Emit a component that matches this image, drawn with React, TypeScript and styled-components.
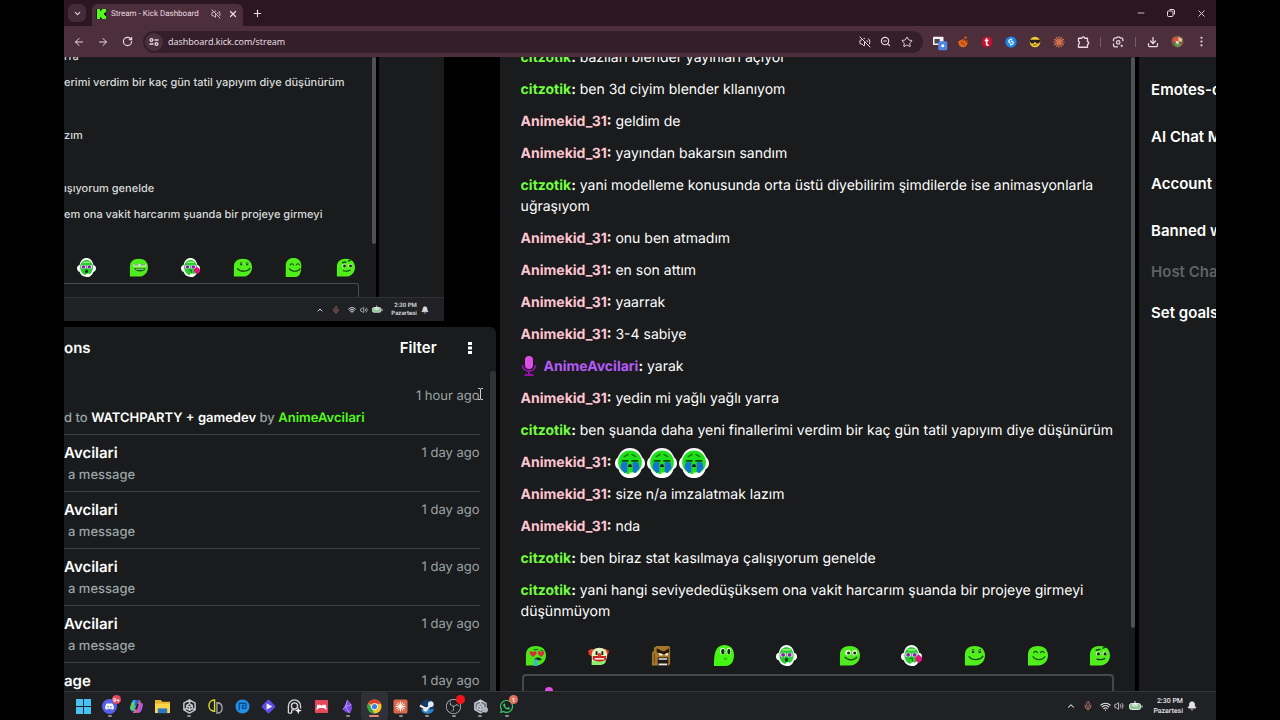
import React from "react";
import styled, { createGlobalStyle } from "styled-components";
import {
  ArrowLeft, ArrowRight, RotateCw, ChevronDown, ChevronUp, X, Plus, Minus, Copy, VolumeOff, ZoomOut, Star,
  Download, EllipsisVertical, Mic, Wifi, Volume2, Bell,
} from "lucide-react";
import { FaDiscord, FaSteam, FaWhatsapp } from "react-icons/fa";
import { SiObsstudio } from "react-icons/si";

const color = {
  frame: "#2c1621",
  toolbar: "#4d2f3c",
  field: "#341e29",
  chromeText: "#ead9e0",
  panel: "#191b1c",
  line: "#3b3f41",
  thumb: "#4f5153",
  muted: "#9aa3a6",
  green: "#53fc18",
  pink: "#ffc5d0",
  purple: "#b45af5",
  taskbar: "#202125",
};

const Global = createGlobalStyle`
  * { box-sizing: border-box; }
  body { margin: 0; background: #000; font-family: Inter, "Liberation Sans", sans-serif; color: #fff; text-rendering: geometricPrecision; }
  button { border: 0; padding: 0; margin: 0; background: none; color: inherit; font: inherit; display: flex; align-items: center; justify-content: center; }
  input { border: 0; background: none; outline: 0; padding: 0; min-width: 0; }
  a { color: inherit; text-decoration: none; }
  ul, p, h2, h3 { margin: 0; padding: 0; list-style: none; font-weight: inherit; }
  svg { display: block; flex: none; }
`;

const Screen = styled.div`
  height: 100vh;
  padding: 0 5%;
  display: flex;
  flex-direction: column;
  overflow: hidden;
`;

/* ---------- browser chrome ---------- */
const TabStrip = styled.div`
  height: 26px;
  padding: 0 6px 0 4px;
  display: flex;
  align-items: flex-end;
  background: ${color.frame};
  color: ${color.chromeText};
  font-family: Roboto, "Open Sans", sans-serif;
`;
const TabSearch = styled.button`
  && { width: 18px; height: 18px; margin: 0 6px 4px 0; border-radius: 6px; background: #462b38; }
`;
const Tab = styled.div`
  width: 151px;
  height: 22px;
  padding: 0 4px 2px;
  display: flex;
  align-items: center;
  gap: 5px;
  border-radius: 6px 6px 0 0;
  background: ${color.toolbar};
  font-size: 8px;
  line-height: 12px;
`;
const TabTitle = styled.span`
  flex: 1;
  white-space: nowrap;
`;
const TabButton = styled.button`
  && { width: 12px; height: 12px; }
`;
const NewTab = styled.button`
  && { width: 16px; height: 16px; margin: 0 auto 5px 6px; }
`;
const WindowButton = styled.button`
  && { width: 30px; height: 26px; }
  &:last-child { margin-right: -6px; }
`;
const Toolbar = styled.div`
  height: 31px;
  padding: 0 3px;
  display: flex;
  align-items: center;
  background: ${color.toolbar};
  color: ${color.chromeText};
`;
const ToolButton = styled.button`
  && { width: 24px; height: 24px; }
`;
const AddressBar = styled.label`
  flex: 1;
  height: 22px;
  margin: 0 4px;
  padding: 0 6px 0 2px;
  display: flex;
  align-items: center;
  border-radius: 11px;
  background: ${color.field};
`;
const SiteInfo = styled.span`
  width: 18px;
  height: 18px;
  margin-right: 5px;
  display: grid;
  place-items: center;
  border-radius: 50%;
  background: #4b303d;
`;
const AddressInput = styled.input`
  flex: 1;
  height: 18px;
  color: #f1e4ea;
  font: 9px/18px "Open Sans", "Noto Sans", sans-serif;
`;
const SmallButton = styled.button`
  && { width: 21px; height: 20px; }
`;
const Divider = styled.span`
  width: 1px;
  height: 10px;
  margin: 0 5px;
  background: #7c5a69;
`;

/* ---------- page ---------- */
const Page = styled.main`
  flex: 1;
  min-height: 0;
  display: grid;
  grid-template-columns: 432fr 636fr 77fr;
  grid-template-rows: minmax(0, 1fr);
  column-gap: 4px;
  background: #000;
  overflow: hidden;
`;
const LeftColumn = styled.div`
  min-width: 0;
  display: flex;
  flex-direction: column;
  gap: 6px;
`;

const Preview = styled.section`
  width: 88%;
  height: 264px;
  display: flex;
  flex-direction: column;
  color: #d8dada;
`;
const PreviewBody = styled.div`
  flex: 1;
  min-height: 0;
  display: flex;
  gap: 3px;
`;
const PreviewChat = styled.div`
  flex: 1;
  min-width: 0;
  display: flex;
  background: ${color.panel};
`;
const PreviewSide = styled.div`
  width: 17%;
  background: ${color.panel};
`;
const PreviewContent = styled.div`
  flex: 1;
  min-width: 0;
  display: flex;
  flex-direction: column;
  overflow: hidden;
`;
const PreviewLines = styled.div`
  flex: 1;
  min-height: 0;
  display: flex;
  flex-direction: column;
  justify-content: flex-end;
  overflow: hidden;
`;
const PreviewLine = styled.p<{ $gap: number }>`
  margin-bottom: ${(p) => p.$gap}px;
  font-size: 11px;
  line-height: 18px;
  && { font-weight: 500; }
  white-space: nowrap;
`;
const PreviewEmotes = styled.div`
  padding: 0 17px 0 13px;
  margin-bottom: 6px;
  display: flex;
  justify-content: space-between;
`;
const PreviewComposer = styled.div`
  height: 14px;
  margin-right: 13px;
  border: 1px solid #4a4c4e;
  border-width: 1px 1px 0 0;
  border-radius: 0 3px 0 0;
`;
const PreviewTaskbar = styled.div`
  height: 24px;
  padding-right: 15px;
  display: flex;
  align-items: center;
  justify-content: flex-end;
  gap: 4px;
  border-top: 1px solid #303134;
  background: ${color.taskbar};
`;
const PreviewClock = styled.time`
  margin-left: 4px;
  font: 600 6px/8px Roboto, "Open Sans", sans-serif;
  text-align: right;
`;

const Thumb = styled.span<{ $height: string; $wide?: boolean }>`
  width: ${(p) => (p.$wide ? 6 : 4)}px;
  height: ${(p) => p.$height};
  flex: none;
  border-radius: 2px;
  background: ${(p) => (p.$wide ? "#303234" : color.thumb)};
`;

const Activity = styled.section`
  flex: 1;
  min-height: 0;
  display: flex;
  flex-direction: column;
  border-radius: 0 6px 0 0;
  background: ${color.panel};
  overflow: hidden;
`;
const ActivityHeader = styled.header`
  height: 44px;
  padding: 0 18px 2px 0;
  display: flex;
  align-items: center;
  font-size: 15px;
  line-height: 20px;
  font-weight: 600;
`;
const ActivityTitle = styled.h2`
  && { flex: 1; font-size: 15px; font-weight: 600; }
`;
const MenuButton = styled.button`
  && { width: 16px; height: 16px; margin-left: 25px; }
`;
const ActivityBody = styled.div`
  flex: 1;
  min-height: 0;
  display: flex;
  overflow: hidden;
`;
const ActivityList = styled.ul`
  && { flex: 1; min-width: 0; margin-right: 10px; }
`;
const ActivityItem = styled.li<{ $first?: boolean }>`
  height: ${(p) => (p.$first ? 64 : 57)}px;
  padding-top: ${(p) => (p.$first ? 15 : 8)}px;
  border-bottom: 1px solid ${color.line};
  font-size: 13px;
  line-height: 20px;
`;
const ItemTop = styled.div`
  display: flex;
  justify-content: space-between;
  color: ${color.muted};
`;
const ItemName = styled.h3`
  && { color: #fff; font-size: 15px; font-weight: 600; }
`;
const ItemText = styled.p<{ $indent?: boolean }>`
  && { padding-left: ${(p) => (p.$indent ? 4 : 0)}px; margin-top: 2px; font-weight: 500; }
  color: ${color.muted};
  white-space: nowrap;
  b { color: #fff; font-weight: 600; }
  a { color: ${color.green}; font-weight: 600; }
`;

const Chat = styled.section`
  min-width: 0;
  min-height: 0;
  display: flex;
  background: ${color.panel};
`;
const ChatMain = styled.div`
  flex: 1;
  min-width: 0;
  padding: 0 17px 0 21px;
  display: flex;
  flex-direction: column;
  overflow: hidden;
`;
const Messages = styled.ul`
  && { flex: 1; min-height: 0; display: flex; flex-direction: column; justify-content: flex-end; gap: 11px; overflow: hidden; }
`;
const Message = styled.li`
  flex: none;
  font-size: 14px;
  line-height: 21px;
`;
const User = styled.b<{ $tone: string }>`
  color: ${(p) => p.$tone};
  font-weight: 700;
`;
const Badge = styled.span`
  display: inline-block;
  height: 20px;
  margin-right: 7px;
  vertical-align: top;
`;
const InlineEmotes = styled.span`
  height: 21px;
  display: inline-flex;
  align-items: center;
  gap: 2px;
  vertical-align: top;
`;
const EmoteRow = styled.div`
  margin: 22px 3px 8px 4px;
  display: flex;
  justify-content: space-between;
`;
const EmoteButton = styled.button`
  && { width: 22px; height: 22px; }
`;
const Composer = styled.label`
  height: 17px;
  margin-left: 1px;
  padding: 11px 16px 0 17px;
  display: flex;
  align-items: flex-start;
  border: 1px solid #46494b;
  border-width: 2px 2px 0;
  border-radius: 4px 4px 0 0;
  overflow: hidden;
`;
const ComposerInput = styled.input`
  flex: 1;
  margin-left: 8px;
  color: #fff;
`;

const Actions = styled.nav`
  min-width: 0;
  padding: 23px 0 0 12px;
  display: flex;
  flex-direction: column;
  align-items: flex-start;
  background: ${color.panel};
  overflow: hidden;
`;
const Action = styled.button<{ $off?: boolean; $tight?: boolean }>`
  && {
    margin-bottom: ${(p) => (p.$tight ? 21 : 27)}px;
    color: ${(p) => (p.$off ? "#5f6264" : "#fff")};
    font-size: 15px;
    line-height: 20px;
    font-weight: 600;
    white-space: nowrap;
  }
`;

/* ---------- taskbar ---------- */
const Taskbar = styled.footer`
  height: 29px;
  padding: 0 19px 0 6px;
  display: flex;
  align-items: stretch;
  border-top: 1px solid #36373a;
  background: ${color.taskbar};
`;
const Apps = styled.div`
  width: 450px;
  display: grid;
  grid-template-columns: repeat(17, 1fr);
`;
const TaskButton = styled.button<{ $open?: boolean; $active?: boolean }>`
  && {
    position: relative;
    border-radius: 3px;
    background: ${(p) => (p.$active ? "#303136" : "none")};
  }
  &::after {
    content: "";
    position: absolute;
    bottom: 3px;
    width: ${(p) => (p.$active ? 10 : 4)}px;
    height: 2px;
    border-radius: 1px;
    background: ${(p) => (p.$active ? "#e0857a" : p.$open ? "#8c8d90" : "transparent")};
  }
`;
const Count = styled.span<{ $tone: string }>`
  position: absolute;
  top: 3px;
  right: 2px;
  width: 9px;
  height: 9px;
  border-radius: 50%;
  background: ${(p) => p.$tone};
  color: #fff;
  font: 600 6px/9px Roboto, sans-serif;
  text-align: center;
`;
const Tray = styled.div`
  margin-left: auto;
  display: flex;
  align-items: center;
  gap: 4px;
  color: #e3e3e6;
`;
const TrayButton = styled.button<{ $wide?: boolean }>`
  && { width: ${(p) => (p.$wide ? 16 : 10)}px; height: 16px; }
`;
const Clock = styled.time`
  margin-left: 5px;
  font: 500 7px/10px Roboto, "Open Sans", sans-serif;
  text-align: right;
`;
const Cursor = styled.svg`
  position: absolute;
  right: -4px;
  top: 2px;
`;
const Time = styled.time`
  position: relative;
`;

/* ---------- emotes ---------- */
type Kind = "love" | "clown" | "brick" | "look" | "rave" | "smile" | "raveKiss" | "grin" | "happy" | "think" | "cool" | "cry" | "tall";

const BLOB = "M1 21.500V10C1 4.500 5 1 11.500 1S22 5 22 11s-5 10.500-10 10.500Z";

const Headset = ({ children }: { children: React.ReactNode }) => (
  <>
    <path d="M3 8C4 3 7 0 11 0s7 3 8 8c2 .5 3 2 3 4s-1 4-3 4c-1 3-3 6-7 6S4 20 3 16c-2 0-3-2-3-4s1-3.500 3-4Z" fill="#fff" />
    <ellipse cx="11" cy="11" rx="7.500" ry="9" fill="#2bd02f" />
    {children}
    <rect x="10" y="18" width="5" height="4" rx="2" fill="#fff" />
  </>
);

const Emote = ({ kind, size = 22 }: { kind: Kind; size?: number }) => (
  <svg width={size} height={size} viewBox="0 0 22 22" fill="none">
    {kind === "love" && (
      <>
        <path d={BLOB} fill="#4fe51d" />
        <path d="M9 5 14 4.500M16 5.500l3 1" stroke="#14500c" />
        <path d="M5 6.500h2l1.500 1 1.500-1h2V9.500L8.500 12.500 5 9.500ZM13.500 6.500h2l1.200 1 1.300-1h2V9.500L16.800 12.500l-3.300-3Z" fill="#d92c3a" />
        <path d="M10 15c1-2.500 6-2.500 7 0v1h-7Z" fill="#122b12" />
        <path d="M9.500 15h3.500v7H9.500Z" fill="#33b5e8" />
      </>
    )}
    {kind === "clown" && (
      <>
        <path d="M0 6l4-2 3 1v6l-3 1-3-2ZM22 6l-4-2-3 1v6l3 1 3-2Z" fill="#e2402f" />
        <path d="M4 21V10c0-4 3-7 8-7s8 3 8 8-3 9-8 10Z" fill="#dff5bd" />
        <path d="M4 17h15c-1 3-4 4-7 4H4Z" fill="#8df06a" />
        <path d="M5 11.500h14v4c-4 2.500-10 2.500-14 0Z" fill="#c3281f" />
        <path d="M7 14.500h10" stroke="#fff" strokeWidth="1.500" />
        <path d="M9 6.500v4M15 6.500v4" stroke="#1c1c1c" strokeWidth="2" />
        <circle cx="12" cy="10.500" r="2" fill="#ea3528" />
      </>
    )}
    {kind === "brick" && (
      <>
        <path d="M1 21.500V8l2-2V3l3-2h13l1 2v17l-1 1.500Z" fill="#a3762a" />
        <path d="M3.500 9v10" stroke="#79551a" strokeWidth="1.500" />
        <path d="M6 3.500 12 6.500h2l5-3v4l-5 2h-2l-6-2Z" fill="#22190d" />
        <path d="M8 8.500l4 1v1.500H9ZM18 8.500l-3 1v1.500h2.500Z" fill="#fff" />
        <rect x="7" y="13" width="11" height="8.500" fill="#1e1a18" />
        <path d="M8 14.700h9M8 20.300h9" stroke="#e8e8e8" strokeWidth="1.600" />
      </>
    )}
    {kind === "look" && (
      <>
        <path d="M1 22c0-5 0-8 1-13C3 4 6 0 12 0s10 4 10 10-2 12-9 12Z" fill="#45f513" />
        <ellipse cx="10" cy="6.500" rx="2.600" ry="3.500" fill="#e8ffe0" /><ellipse cx="16.500" cy="6.500" rx="2.300" ry="3.500" fill="#e8ffe0" />
        <ellipse cx="10.300" cy="6.800" rx="1.800" ry="3" fill="#123010" /><ellipse cx="16.600" cy="6.800" rx="1.600" ry="3" fill="#123010" />
        <path d="M11.500 15 13 14l1.500 1" stroke="#196b10" />
      </>
    )}
    {(kind === "rave" || kind === "raveKiss") && (
      <Headset>
        <path d="M7 5h8" stroke="#9ef08a" strokeWidth="1.500" />
        <rect x="4.500" y="8" width="6" height="4.500" rx="2" fill="#eee4ff" /><rect x="11.500" y="8" width="6" height="4.500" rx="2" fill="#eee4ff" />
        <circle cx="7.500" cy="10.300" r="2" fill="#8a1fae" /><circle cx="14.300" cy="10.300" r="2" fill="#8a1fae" />
        {kind === "rave" ? (
          <ellipse cx="11" cy="15.500" rx="1.800" ry="2.200" fill="#123b17" />
        ) : (
          <>
            <path d="M9 14h3v3" stroke="#0c5d1b" />
            <path d="M15 13l3.500-3 3.500 3v3l-3.500 3-3.500-3Z" fill="#e0147c" />
          </>
        )}
      </Headset>
    )}
    {kind === "smile" && (
      <>
        <path d={BLOB} fill="#50ea20" />
        <ellipse cx="9.500" cy="8" rx="3" ry="2.700" fill="#f2ffe9" /><ellipse cx="16.500" cy="8" rx="2.600" ry="2.700" fill="#f2ffe9" />
        <circle cx="10" cy="8.300" r="1.600" fill="#123010" /><circle cx="16.500" cy="8.300" r="1.600" fill="#123010" />
        <path d="M6 12.500c3 4 10 4 13 0" stroke="#164d10" strokeWidth="1.400" />
      </>
    )}
    {kind === "grin" && (
      <>
        <path d={BLOB} fill="#50ef1c" />
        <path d="M9.500 4.500v4M16.500 4.500v4" stroke="#12300e" strokeWidth="2.200" /><path d="M9.500 5v1.500M16.500 5v1.500" stroke="#e8ffe0" />
        <path d="M5 12c3 4.500 12 4.500 15-.5" stroke="#16540f" strokeWidth="1.500" />
      </>
    )}
    {(kind === "happy" || kind === "tall") && (
      <>
        <path d={kind === "tall" ? "M2 22V9C2 3 6 0 11 0s9 3 9 9-1 13-7 13Z" : BLOB} fill="#50ef1c" />
        <path d="M7 8.500c.5-2.500 3.500-2.500 4 0M14 8.500c.5-2.500 3.500-2.500 4 0M6 12c3 4.500 10 4.500 13 0" stroke="#16540f" strokeWidth="1.300" />
      </>
    )}
    {kind === "think" && (
      <>
        <path d={BLOB} fill="#50ef1c" />
        <path d="M7 5.500 12 4.500M14 3.500l4-1.500" stroke="#12400d" strokeWidth="1.500" />
        <circle cx="9.500" cy="9" r="2.300" fill="#eaffdf" /><circle cx="16.500" cy="9" r="2.300" fill="#eaffdf" />
        <circle cx="9.800" cy="9.300" r="1.700" fill="#12300e" /><circle cx="16.800" cy="9.300" r="1.700" fill="#12300e" />
        <path d="M8 14.500c3 1.500 6 1 9-.5" stroke="#12400d" strokeWidth="1.300" />
      </>
    )}
    {kind === "cool" && (
      <>
        <path d={BLOB} fill="#50ea20" />
        <path d="M5 8.500h15" stroke="#d9f5cf" strokeWidth="3" /><path d="M6 8h5M13 8h6" stroke="#317d21" />
        <path d="M6 12h13c-1 5-11 5-13 0Z" fill="#146016" /><path d="M8 13h9" stroke="#b8f0a8" />
      </>
    )}
    {kind === "cry" && (
      <>
        <path d="M2 7C4 2 7 0 11 0s7 2 9 7c1.500 1 2 3 2 4.500s-1 3.500-2.500 4C18 20 15 22 11 22S4 20 2.500 15.500C1 15 0 13 0 11.500S.5 8 2 7Z" fill="#fff" />
        <circle cx="11" cy="10.500" r="8.700" fill="#1fe01a" />
        <path d="M6.500 6.500 10 4.500M15.500 6.500 12 4.500" stroke="#0b7a12" /><path d="M5 9.500h5M12 9.500h5" stroke="#0b4a12" strokeWidth="1.300" />
        <path d="M5 10.500h4v7l-2 1-3-4ZM13 10.500h4l1 4-3 4-2-1Z" fill="#1670d8" />
        <path d="M9.500 14c0-3 3-3 3 0Z" fill="#08200c" />
        <rect x="10" y="18" width="5" height="3.500" rx="1.700" fill="#fff" />
      </>
    )}
  </svg>
);

const MicBadge = () => (
  <svg width="16" height="20" viewBox="0 0 16 20" fill="none">
    <path d="M1.500 9c0 8 13 8 13 0M8 15v4M3.500 19h9" stroke="#8f11a8" strokeWidth="2" />
    <rect x="4" y="0" width="8" height="13" rx="4" fill="#dc4fe6" />
  </svg>
);

/* ---------- data ---------- */
type Line = { user: "citzotik" | "Animekid_31" | "AnimeAvcilari"; text?: string; cry?: boolean };
const lines: Line[] = [
  { user: "citzotik", text: "bazıları blender yayınları açıyor" },
  { user: "citzotik", text: "ben 3d ciyim blender kllanıyom" },
  { user: "Animekid_31", text: "geldim de" },
  { user: "Animekid_31", text: "yayından bakarsın sandım" },
  { user: "citzotik", text: "yani modelleme konusunda orta üstü diyebilirim şimdilerde ise animasyonlarla uğraşıyom" },
  { user: "Animekid_31", text: "onu ben atmadım" },
  { user: "Animekid_31", text: "en son attım" },
  { user: "Animekid_31", text: "yaarrak" },
  { user: "Animekid_31", text: "3-4 sabiye" },
  { user: "AnimeAvcilari", text: "yarak" },
  { user: "Animekid_31", text: "yedin mi yağlı yağlı yarra" },
  { user: "citzotik", text: "ben şuanda daha yeni finallerimi verdim bir kaç gün tatil yapıyım diye düşünürüm" },
  { user: "Animekid_31", cry: true },
  { user: "Animekid_31", text: "size n/a imzalatmak lazım" },
  { user: "Animekid_31", text: "nda" },
  { user: "citzotik", text: "ben biraz stat kasılmaya çalışıyorum genelde" },
  { user: "citzotik", text: "yani hangi seviyededüşüksem ona vakit harcarım şuanda bir projeye girmeyi düşünmüyom" },
];
const tone = { citzotik: "#72fc3f", Animekid_31: color.pink, AnimeAvcilari: color.purple };
const rowEmotes: Kind[] = ["love", "clown", "brick", "look", "rave", "smile", "raveKiss", "grin", "happy", "think"];
const previewEmotes: Kind[] = ["rave", "cool", "raveKiss", "grin", "tall", "think"];

/* ---------- small drawings ---------- */
const KickLogo = () => (
  <svg width="10" height="10" viewBox="0 0 10 10">
    <rect width="10" height="10" fill="#0b1a08" />
    <path d="M1 0h3v2h1V1h1V0h4v3H9v1H8v2h1v1h1v3H6V9H5V8H4v2H1Z" fill="#53fc18" />
  </svg>
);
const Tune = () => (
  <svg width="10" height="10" viewBox="0 0 10 10" fill="none" stroke={color.chromeText} strokeWidth="1.300">
    <circle cx="2.500" cy="3" r="1.400" /><path d="M5.500 3H9.500M.5 7h4" /><circle cx="7.500" cy="7" r="1.400" />
  </svg>
);
const burst = (stroke: string, width: number) => (
  <path d="M8 8V1M8 8l3.500-6M8 8l6-3.500M8 8h7M8 8l6 3.500M8 8l3.500 6M8 8v7M8 8l-3.500 6M8 8l-6 3.500M8 8H1M8 8 2 4.500M8 8 4.500 2" stroke={stroke} strokeWidth={width} strokeLinecap="round" />
);

const extensions: { name: string; art: React.ReactNode }[] = [
  { name: "Window capture", art: (<><rect x="0" y="1" width="14" height="11" rx="1" fill="#f3f1f3" /><path d="M2 4h7v6H2Z" fill="#4b4650" /><rect x="7" y="7" width="12" height="12" rx="2" fill="#4d86e0" /><circle cx="13" cy="13" r="2" fill="#fff" /></>) },
  { name: "Cookies", art: (<><path d="M2 7l6-3 6 4c0 5-3 7-6 7s-7-3-6-8Z" fill="#e8671c" /><path d="M8 7l3-5M11 9l4-4M5 8l5 4" stroke="#9c3d12" strokeWidth="1.500" /><circle cx="11.500" cy="2" r="1.500" fill="#e8671c" /></>) },
  { name: "Turbo", art: (<><rect x="1" y="1" width="14" height="14" rx="6" fill="#c4122e" /><path d="M7.500 3v7.500c0 1.500 1 1.800 2.500 1.500M5 6h5" stroke="#fff" strokeWidth="2.200" /></>) },
  { name: "Shazam", art: (<><circle cx="8" cy="8" r="7.500" fill="#1d86ea" /><path d="M9.500 4C4 5 3.500 8 8 9.500M6.500 12c5.500-1 6-4 1.500-5.500" stroke="#e6f3ff" strokeWidth="1.700" /></>) },
  { name: "Emoji", art: (<><circle cx="8" cy="8" r="7" fill="#f6cb37" /><path d="M1 5h14v2l-2 3h-3L8 7.500 6 10H3L1 7Z" fill="#2a2024" /><path d="M5.500 12h5" stroke="#8a4b12" strokeWidth="1.400" /></>) },
  { name: "Assistant", art: burst("#d0714f", 1.6) },
  { name: "Extensions", art: <path d="M2 3h4.500a1.800 1.800 0 0 1 3.600 0H14v4.500a1.700 1.700 0 0 1 0 3.400V15H2v-4.300a1.800 1.800 0 0 0 0-3.500Z" stroke={color.chromeText} strokeWidth="1.700" strokeLinejoin="round" /> },
];

const cube = (stroke: string, width: number) => (
  <path d="M8 1l6 3.500v7L8 15l-6-3.500v-7ZM8 5l3 1.700v3.400L8 12l-3-1.900V6.700ZM8 8.500V12M5 6.700l3 1.800 3-1.800M8 1v4M2 11.500l3-1.400M14 11.500l-3-1.400" stroke={stroke} strokeWidth={width} strokeLinejoin="round" />
);

const taskApps: { name: string; art: React.ReactNode; open?: boolean; active?: boolean; count?: string; tone?: string }[] = [
  { name: "Start", art: (<path d="M0 0h7.500v7.500H0ZM8.500 0H16v7.500H8.500ZM0 8.500h7.500V16H0ZM8.500 8.500H16V16H8.500Z" fill="#46c3f3" />) },
  { name: "Discord", open: true, count: "9+", tone: "#e2495c", art: (<><circle cx="8" cy="8" r="8" fill="#5562ea" /><g transform="translate(3 3)"><FaDiscord size={10} color="#fff" /></g></>) },
  { name: "Copilot", art: (<><path d="M4 1h6L7 12c-1 2-6 1-6-2Z" fill="#29a8df" /><path d="M1 9 3 3l4 1-2 8H3Z" fill="#5fc86a" /><path d="M10 1c3 0 3 3 2 6l-2 6c-1 2-5 2-6 2l3-5 1-6Z" fill="#e7607a" /><path d="M7 1h4L9 7H6Z" fill="#2b5fd2" /><path d="M12 4c4 0 3 3 2 6-1 4-3 5-6 5Z" fill="#b25bd8" /><path d="M9.500 5.500 7.500 11" stroke={color.taskbar} strokeWidth="2" /></>) },
  { name: "Files", art: (<><path d="M0 1h6l2 2h8v11H0Z" fill="#e9b52b" /><path d="M0 5h16v10H0Z" fill="#fbd64b" /><path d="M3 10h10v5H3Z" fill="#2878c8" /></>) },
  { name: "Unity Hub", open: true, art: cube("#c3c5c9", 1.6) },
  { name: "Editor", art: (<><path d="M7 1v12C3 13 1 10 1 7s2-6 6-6Z" stroke="#d9dc2b" strokeWidth="1.500" /><path d="M9.500 4v11c3.500 0 5.500-2 5.500-5.500S13 4 9.500 4Z" stroke="#a9abae" strokeWidth="1.400" /></>) },
  { name: "Mail", art: (<><circle cx="8" cy="8" r="7.500" fill="#2290e4" /><path d="M4.500 12V4.500h7V10H8V7h2" stroke="#0d4c93" strokeWidth="1.500" /></>) },
  { name: "Clip editor", art: (<><rect x="2.500" y="2.500" width="11" height="11" rx="1" transform="rotate(45 8 8)" fill="#5b4ee0" /><path d="M6 4.500 12 8l-6 3.500Z" fill="#f3f0ff" /></>) },
  { name: "Recorder", art: (<><path d="M1.500 15V7.500a6.500 6.500 0 0 1 13 0V10M5 15v-3.500M5 11.500h3M1.500 15H5" stroke="#d7d8da" strokeWidth="1.400" /><circle cx="8" cy="7.500" r="3.300" stroke="#d7d8da" strokeWidth="1.400" /><path d="M12 9l1 2.500 3 .7-3 1-1 3-1-3-2.500-1 2.500-.7Z" fill="#fff" /></>) },
  { name: "Gamepad", art: (<><rect x="1" y="1" width="14" height="14" rx="1" fill="#e5475c" /><path d="M2.500 12l1-6h3l1 1h1l1-1h3l1 6-3-2.500h-5Z" fill="#fff" /></>) },
  { name: "Notes", open: true, art: (<><path d="M8 1l4 4 1 5-2 5-5-1-3-3 2-4Z" fill="#7a4be0" /><path d="M8 1 6 8l4 7M3 11l3-3 6-2" stroke="#b79bf5" /></>) },
  { name: "Chrome", active: true, art: (<><circle cx="8" cy="8" r="7.500" fill="#f3c42c" /><path d="M8 8 1.500 4.200A7.500 7.500 0 0 1 14.500 4.200L15 5H8Z" fill="#e0402f" /><path d="M1.500 4.200 5.500 11 8 15.500A7.500 7.500 0 0 1 1.500 4.200Z" fill="#2fa650" /><circle cx="8" cy="8" r="3.600" fill="#fff" /><circle cx="8" cy="8" r="2.800" fill="#3f7ee8" /></>) },
  { name: "Claude", open: true, art: (<><rect x=".5" y=".5" width="15" height="15" rx="2" fill="#d7674c" /><g transform="translate(2.400 2.400) scale(.7)">{burst("#fff3ec", 1.5)}</g></>) },
  { name: "Steam", open: true, art: (<><path d="M1 5a7.500 7.500 0 1 1 0 6l5 2 3-3Z" fill="#153a66" /><path d="M1 11a7.500 7.500 0 0 0 14 0Z" fill="#2e86c4" /><path d="M0 7l7 4 5-5" stroke="#e3ecf4" strokeWidth="2.400" /><circle cx="11.500" cy="5.500" r="3" fill="#e3ecf4" /><circle cx="6" cy="11" r="2.500" fill="#e3ecf4" /></>) },
  { name: "OBS Studio", open: true, tone: "#f5141b", count: "", art: <SiObsstudio size={16} color="#c5c6c8" /> },
  { name: "Unity", open: true, art: (<><path d="M7 1l6 3v7l-6 4-6-4V4Z" fill="#7d818c" />{cube("#c6c9d1", 1.3)}<circle cx="13" cy="11.500" r="3" fill="#b2b6c2" /></>) },
  { name: "WhatsApp", open: true, count: "1", tone: "#e2705f", art: <FaWhatsapp size={16} color="#35d469" /> },
];

const Art = ({ size, children }: { size: number; children: React.ReactNode }) => (
  <svg width={size} height={size} viewBox="0 0 16 16" fill="none" overflow="visible">{children}</svg>
);

const Battery = ({ size }: { size: number }) => (
  <svg width={size} height={size} viewBox="0 0 14 14" fill="none">
    <rect x=".5" y="4.500" width="11" height="6" rx="2" fill="#8fc494" stroke="#dcefdc" />
    <path d="M13 6.500v2M6 2v4M4 5h4v2H4Z" stroke="#eef6ee" />
  </svg>
);

export default function App() {
  return (
    <Screen>
      <Global />
      <TabStrip>
        <TabSearch aria-label="Search tabs"><ChevronDown size={9} strokeWidth={3} /></TabSearch>
        <Tab>
          <KickLogo />
          <TabTitle>Stream - Kick Dashboard</TabTitle>
          <TabButton aria-label="Unmute tab"><VolumeOff size={10} /></TabButton>
          <TabButton aria-label="Close tab"><X size={10} strokeWidth={3} /></TabButton>
        </Tab>
        <NewTab aria-label="New tab"><Plus size={11} strokeWidth={2.5} /></NewTab>
        <WindowButton aria-label="Minimize"><Minus size={10} /></WindowButton>
        <WindowButton aria-label="Restore">
          <svg width="8" height="8" viewBox="0 0 8 8" fill="none" stroke={color.chromeText}>
            <rect x=".5" y="2" width="5.500" height="5.500" rx="1" /><path d="M2.500.5H6A1.500 1.500 0 0 1 7.500 2v3.500" />
          </svg>
        </WindowButton>
        <WindowButton aria-label="Close"><X size={11} /></WindowButton>
      </TabStrip>

      <Toolbar>
        <ToolButton aria-label="Back"><ArrowLeft size={12} /></ToolButton>
        <ToolButton aria-label="Forward"><ArrowRight size={12} /></ToolButton>
        <ToolButton aria-label="Reload"><RotateCw size={11} strokeWidth={2.5} /></ToolButton>
        <AddressBar>
          <SiteInfo><Tune /></SiteInfo>
          <AddressInput aria-label="Address" defaultValue="dashboard.kick.com/stream" />
          <SmallButton aria-label="Sound blocked"><VolumeOff size={12} /></SmallButton>
          <SmallButton aria-label="Zoom"><ZoomOut size={11} strokeWidth={2.5} /></SmallButton>
          <SmallButton aria-label="Bookmark"><Star size={12} /></SmallButton>
        </AddressBar>
        {extensions.map((e) => (
          <ToolButton key={e.name} aria-label={e.name}><Art size={12}>{e.art}</Art></ToolButton>
        ))}
        <Divider />
        <ToolButton aria-label="Lens">
          <Art size={12}>
            <path d="M2 7V5a2.500 2.500 0 0 1 2.500-2.500H6L7 1.500h3l1 1h1A2.500 2.500 0 0 1 14.500 5v2M2 10v2a2.500 2.500 0 0 0 2.500 2.500H8" stroke={color.chromeText} strokeWidth="1.700" />
            <circle cx="8.300" cy="8.500" r="2.300" stroke={color.chromeText} strokeWidth="1.700" /><circle cx="13" cy="13" r="1.500" fill={color.chromeText} />
          </Art>
        </ToolButton>
        <Divider />
        <ToolButton aria-label="Downloads"><Download size={12} strokeWidth={2.5} /></ToolButton>
        <ToolButton aria-label="Profile">
          <Art size={13}>
            <circle cx="8" cy="8" r="7.500" fill="#6f5b48" />
            <path d="M2 4l5-2 3 3-4 4-4-1Z" fill="#d9523c" /><path d="M9 2l5 3-1 4-4-2Z" fill="#e8c88c" />
            <path d="M4 10l5-1 4 3-4 3-4-2Z" fill="#5d9e4b" /><path d="M6 7l4 1-1 3-3-1Z" fill="#f0d9c0" /><path d="M11 9l3 1-1 3Z" fill="#d63a34" />
          </Art>
        </ToolButton>
        <ToolButton aria-label="Menu"><EllipsisVertical size={13} /></ToolButton>
      </Toolbar>

      <Page>
        <LeftColumn>
          <Preview aria-label="Stream preview">
            <PreviewBody>
              <PreviewChat>
                <PreviewContent>
                  <PreviewLines>
                    <PreviewLine $gap={8}>rra</PreviewLine>
                    <PreviewLine $gap={35}>erimi verdim bir kaç gün tatil yapıyım diye düşünürüm</PreviewLine>
                    <PreviewLine $gap={35}>zım</PreviewLine>
                    <PreviewLine $gap={8}>ışıyorum genelde</PreviewLine>
                    <PreviewLine $gap={35}>em ona vakit harcarım şuanda bir projeye girmeyi</PreviewLine>
                  </PreviewLines>
                  <PreviewEmotes>
                    {previewEmotes.map((k) => <Emote key={k} kind={k} size={19} />)}
                  </PreviewEmotes>
                  <PreviewComposer />
                </PreviewContent>
                <Thumb $height="78%" />
              </PreviewChat>
              <PreviewSide />
            </PreviewBody>
            <PreviewTaskbar>
              <ChevronUp size={8} strokeWidth={3} /><Art size={16}><g transform="translate(4 4)"><Mic size={8} color="#b0706a" /></g></Art><Wifi size={8} strokeWidth={3} /><Volume2 size={8} /><Battery size={11} />
              <PreviewClock>2:30 PM<br />Pazartesi</PreviewClock>
              <Bell size={8} fill="currentColor" />
            </PreviewTaskbar>
          </Preview>

          <Activity>
            <ActivityHeader>
              <ActivityTitle>ons</ActivityTitle>
              <button>Filter</button>
              <MenuButton aria-label="More">
                <svg width="4" height="12" viewBox="0 0 4 12" fill="#fff"><path d="M0 0h4v3H0ZM0 4.500h4v3H0ZM0 9h4v3H0Z" /></svg>
              </MenuButton>
            </ActivityHeader>
            <ActivityBody>
              <ActivityList>
                <ActivityItem $first>
                  <ItemTop>
                    <span />
                    <Time>
                      1 hour ago
                      <Cursor width="7" height="12" viewBox="0 0 7 12" fill="none" stroke="#c8cacb">
                        <path d="M1 .5h2l.5.5.5-.5h2M1 11.500h2l.5-.5.5.5h2M3.500 1v10" />
                      </Cursor>
                    </Time>
                  </ItemTop>
                  <ItemText>d to <b>WATCHPARTY + gamedev</b> by <a href="#user">AnimeAvcilari</a></ItemText>
                </ActivityItem>
                {[0, 1, 2, 3].map((i) => (
                  <ActivityItem key={i}>
                    <ItemTop><ItemName>Avcilari</ItemName><time>1 day ago</time></ItemTop>
                    <ItemText $indent>a message</ItemText>
                  </ActivityItem>
                ))}
                <ActivityItem>
                  <ItemTop><ItemName>age</ItemName><time>1 day ago</time></ItemTop>
                </ActivityItem>
              </ActivityList>
              <Thumb $height="110%" $wide />
            </ActivityBody>
          </Activity>
        </LeftColumn>

        <Chat aria-label="Chat">
          <ChatMain>
            <Messages>
              {lines.map((l, i) => (
                <Message key={i}>
                  {l.user === "AnimeAvcilari" && <Badge><MicBadge /></Badge>}
                  <User $tone={tone[l.user]}>{l.user}</User>
                  <b>:</b> {l.text}
                  {l.cry && <InlineEmotes>{[0, 1, 2].map((n) => <Emote key={n} kind="cry" size={30} />)}</InlineEmotes>}
                </Message>
              ))}
            </Messages>
            <EmoteRow>
              {rowEmotes.map((k) => <EmoteButton key={k} aria-label={k}><Emote kind={k} size={21} /></EmoteButton>)}
            </EmoteRow>
            <Composer>
              <MicBadge />
              <ComposerInput aria-label="Send a message" />
            </Composer>
          </ChatMain>
          <Thumb $height="90%" />
        </Chat>

        <Actions aria-label="Channel actions">
          <Action>Emotes-o</Action>
          <Action>AI Chat M</Action>
          <Action>Account a</Action>
          <Action $tight>Banned w</Action>
          <Action $off $tight>Host Cha</Action>
          <Action>Set goals</Action>
        </Actions>
      </Page>

      <Taskbar>
        <Apps>
          {taskApps.map((a) => (
            <TaskButton key={a.name} aria-label={a.name} $open={a.open} $active={a.active}>
              <Art size={15}>{a.art}</Art>
              {a.count !== undefined && <Count $tone={a.tone ?? "#e2495c"}>{a.count}</Count>}
            </TaskButton>
          ))}
        </Apps>
        <Tray>
          <TrayButton aria-label="Hidden icons"><ChevronUp size={10} strokeWidth={2.5} /></TrayButton>
          <TrayButton $wide aria-label="Microphone"><Mic size={10} color="#c97d70" /></TrayButton>
          <TrayButton aria-label="Network"><Wifi size={11} strokeWidth={2.5} /></TrayButton>
          <TrayButton aria-label="Volume"><Volume2 size={10} /></TrayButton>
          <TrayButton $wide aria-label="Battery"><Battery size={14} /></TrayButton>
          <Clock>2:30 PM<br />Pazartesi</Clock>
          <TrayButton aria-label="Notifications"><Bell size={10} fill="currentColor" /></TrayButton>
        </Tray>
      </Taskbar>
    </Screen>
  );
}
